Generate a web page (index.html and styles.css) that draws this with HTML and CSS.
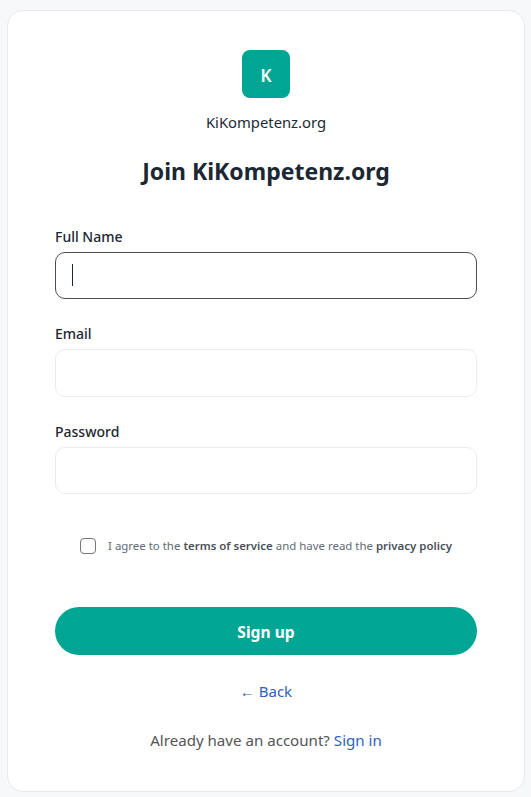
FILE: index.html
```html
<!DOCTYPE html>
<html lang="en">
<head>
<meta charset="utf-8">
<title>Join KiKompetenz.org</title>
<link rel="stylesheet" href="styles.css">
</head>
<body>
<main class="card">
  <header class="brand">
    <div class="logo">K</div>
    <div class="brand-name">KiKompetenz.org</div>
  </header>
  <h1 class="title">Join KiKompetenz.org</h1>
  <form class="form">
    <div class="field">
      <label class="label">Full Name</label>
      <div class="input input-focus"><span class="caret"></span></div>
    </div>
    <div class="field">
      <label class="label">Email</label>
      <div class="input"></div>
    </div>
    <div class="field">
      <label class="label">Password</label>
      <div class="input"></div>
    </div>
    <div class="agree">
      <span class="check"></span>
      <span class="agree-text">I agree to the <b>terms of service</b> and have read the <b>privacy policy</b></span>
    </div>
    <div class="submit">Sign up</div>
  </form>
  <a class="back">← Back</a>
  <p class="signin">Already have an account? <a class="link">Sign in</a></p>
</main>
</body>
</html>
```
FILE: styles.css
```css
* { box-sizing: border-box; }
html, body { margin: 0; height: 100%; }
body {
  background: #f6f8fa;
  font-family: "Noto Sans", "Open Sans", sans-serif;
  color: #1b2733;
  overflow: hidden;
  padding: 10px 6px 5px 7px;
}
.card {
  width: 518px;
  height: 782px;
  background: #fff;
  border: 1px solid #e6e9ee;
  border-radius: 16px;
  padding: 39px 47px 0;
  display: flex;
  flex-direction: column;
  align-items: stretch;
}
.brand { display: flex; flex-direction: column; align-items: center; }
.logo {
  width: 48px;
  height: 48px;
  border-radius: 8px;
  background: #00a693;
  color: #fff;
  font-weight: 600;
  font-size: 17px;
  padding-top: 3px;
  display: flex;
  align-items: center;
  justify-content: center;
}
.brand-name { margin-top: 12px; font-size: 14.8px; line-height: 24px; color: #212b36; }
.title { margin: 21px 0 0; font-size: 23px; line-height: 32px; font-weight: 700; text-align: center; color: #1b2733; }
.form { display: flex; flex-direction: column; margin-top: 39.5px; }
.field { display: flex; flex-direction: column; margin-bottom: 25px; }
.label { font-size: 14px; line-height: 20px; font-weight: 500; color: #1b2733; margin-bottom: 5px; }
.input { height: 47.5px; border: 1px solid #e8ebef; border-radius: 10px; background: #fff; display: flex; align-items: center; padding-left: 16px; }
.input-focus { border-color: #4a4f55; }
.caret { width: 1px; height: 22px; background: #1b2733; }
.agree { display: flex; align-items: center; justify-content: center; margin-top: 14.5px; gap: 12px; height: 24px; }
.check { width: 16px; height: 16px; border: 1px solid #767676; border-radius: 4px; background: #fff; }
.agree-text { font-size: 11.45px; color: #616b75; }
.agree-text b { font-weight: 600; color: #4a5058; }
.submit {
  margin-top: 49px;
  height: 48px;
  border-radius: 24px;
  background: #00a693;
  color: #fff;
  font-size: 15.6px;
  font-weight: 700;
  padding-top: 2px;
  display: flex;
  align-items: center;
  justify-content: center;
}
.back { margin-top: 24.5px; font-size: 15px; line-height: 24px; color: #2f5fc4; text-align: center; }
.signin { margin: 24.5px 0 0; font-size: 15.1px; line-height: 24px; color: #555; text-align: center; }
.link { color: #2f5fc4; }
```
